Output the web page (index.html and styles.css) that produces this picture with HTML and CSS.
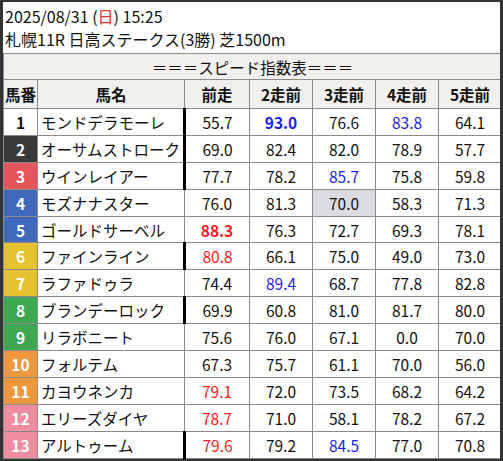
FILE: index.html
```html
<!DOCTYPE html>
<html lang="ja">
<head>
<meta charset="utf-8">
<link rel="stylesheet" href="styles.css">
</head>
<body>
<div class="frame">
  <div class="title">
    <div class="line">2025/08/31 (<span class="sun">日</span>) 15:25</div>
    <div class="line">札幌11R 日高ステークス(3勝) 芝1500m</div>
  </div>
  <table class="idx">
    <colgroup>
      <col class="c-no"><col class="c-name"><col class="c-v0"><col class="c-v"><col class="c-v"><col class="c-v"><col class="c-v">
    </colgroup>
    <thead>
      <tr class="band"><th colspan="7">＝＝＝スピード指数表＝＝＝</th></tr>
      <tr class="head"><th>馬番</th><th>馬名</th><th>前走</th><th>2走前</th><th>3走前</th><th>4走前</th><th>5走前</th></tr>
    </thead>
    <tbody>
      <tr><td class="no w1">1</td><td class="name">モンドデラモーレ</td><td class="v gap">55.7</td><td class="v blue b">93.0</td><td class="v">76.6</td><td class="v blue">83.8</td><td class="v">64.1</td></tr>
      <tr><td class="no w2">2</td><td class="name">オーサムストローク</td><td class="v gap">69.0</td><td class="v">82.4</td><td class="v">82.0</td><td class="v">78.9</td><td class="v">57.7</td></tr>
      <tr><td class="no w3">3</td><td class="name">ウインレイアー</td><td class="v gap">77.7</td><td class="v">78.2</td><td class="v blue">85.7</td><td class="v">75.8</td><td class="v">59.8</td></tr>
      <tr><td class="no w4">4</td><td class="name">モズナナスター</td><td class="v">76.0</td><td class="v">81.3</td><td class="v shade">70.0</td><td class="v">58.3</td><td class="v">71.3</td></tr>
      <tr><td class="no w4">5</td><td class="name">ゴールドサーベル</td><td class="v red b">88.3</td><td class="v">76.3</td><td class="v">72.7</td><td class="v">69.3</td><td class="v">78.1</td></tr>
      <tr><td class="no w5">6</td><td class="name">ファインライン</td><td class="v gap red">80.8</td><td class="v">66.1</td><td class="v">75.0</td><td class="v">49.0</td><td class="v">73.0</td></tr>
      <tr><td class="no w5">7</td><td class="name">ラファドゥラ</td><td class="v">74.4</td><td class="v blue">89.4</td><td class="v">68.7</td><td class="v">77.8</td><td class="v">82.8</td></tr>
      <tr><td class="no w6">8</td><td class="name">ブランデーロック</td><td class="v gap">69.9</td><td class="v">60.8</td><td class="v">81.0</td><td class="v">81.7</td><td class="v">80.0</td></tr>
      <tr><td class="no w6">9</td><td class="name">リラボニート</td><td class="v">75.6</td><td class="v">76.0</td><td class="v">67.1</td><td class="v">0.0</td><td class="v">70.0</td></tr>
      <tr><td class="no w7">10</td><td class="name">フォルテム</td><td class="v">67.3</td><td class="v">75.7</td><td class="v">61.1</td><td class="v">70.0</td><td class="v">56.0</td></tr>
      <tr><td class="no w7">11</td><td class="name">カヨウネンカ</td><td class="v red">79.1</td><td class="v">72.0</td><td class="v">73.5</td><td class="v">68.2</td><td class="v">64.2</td></tr>
      <tr><td class="no w8">12</td><td class="name">エリーズダイヤ</td><td class="v red">78.7</td><td class="v">71.0</td><td class="v">58.1</td><td class="v">78.2</td><td class="v">67.2</td></tr>
      <tr><td class="no w8">13</td><td class="name">アルトゥーム</td><td class="v gap red">79.6</td><td class="v">79.2</td><td class="v blue">84.5</td><td class="v">77.0</td><td class="v">70.8</td></tr>
    </tbody>
  </table>
</div>
</body>
</html>
```
FILE: styles.css
```css
html, body {
  margin: 0;
  padding: 0;
  background: #ffffff;
}
body {
  font-family: "Noto Sans CJK JP", "Noto Sans", sans-serif;
  color: #111;
}
.frame {
  width: 503px;
  height: 461px;
  box-sizing: border-box;
  border-style: solid;
  border-color: #333333;
  border-width: 2px 3px 2px 3px;
  background: #fff;
  overflow: hidden;
}
.title {
  height: 51px;
  box-sizing: border-box;
  padding: 3px 0 0 2px;
  font-size: 16px;
  line-height: 23px;
}
.sun { color: #e83030; }
.idx {
  width: 100%;
  border-collapse: collapse;
  table-layout: fixed;
  font-size: 15.5px;
}
.c-no { width: 34px; }
.c-name { width: 147px; }
.c-v0 { width: 65px; }
.c-v { width: 63px; }
.idx th, .idx td {
  border: 1px solid #8a8a8a;
  padding: 0;
  white-space: nowrap;
  overflow: hidden;
}
.band th {
  background: #f1f0ec;
  font-weight: normal;
  height: 25px;
  line-height: 24px;
  text-align: center;
}
.head th {
  background: #f1f0ec;
  font-weight: bold;
  height: 28px;
  text-align: center;
}
.idx tbody tr { height: 26.9px; }
.idx td { line-height: 24px; }
.no {
  text-align: center;
  font-weight: bold;
  color: #fff;
}
.w1 { background: #fff; color: #111; }
.w2 { background: #3a3a3a; }
.w3 { background: #e5565a; }
.w4 { background: #4069b9; }
.w5 { background: #e7c230; }
.w6 { background: #3fa751; }
.w7 { background: #ef973c; }
.w8 { background: #ef8da0; }
.name {
  text-align: left;
  padding-left: 3px !important;
}
.v { text-align: center; }
.gap { border-left: 3px solid #000 !important; }
.blue { color: #1c1cf5; }
.red { color: #ff1a1a; }
.b { font-weight: bold; }
.shade { background: #dcdce0; }
```
